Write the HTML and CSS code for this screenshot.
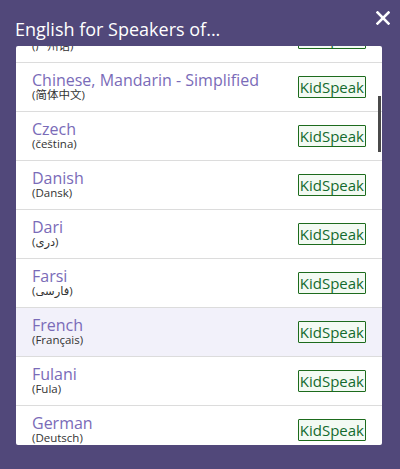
FILE: index.html
```html
<html lang="en">
<head>
  <meta charset="UTF-8">
  <title>English for Speakers of...</title>
  <link rel="stylesheet" href="styles.css">
</head>
<body>

<div class="dialog">
  <div class="dialog_header">
    <h1 class="dialog_title">English for Speakers of...</h1>
    <button class="dialog_close" aria-label="Close">
      <svg viewBox="0 0 14 14" width="14" height="14">
        <line x1="1.5" y1="1.5" x2="12.5" y2="12.5" />
        <line x1="12.5" y1="1.5" x2="1.5" y2="12.5" />
      </svg>
    </button>
  </div>

  <div class="lang_panel">
    <ul class="lang_list">
      <!-- list is scrolled: the Cantonese row is only partly in view -->
      <li class="lang_row lang_row--cut">
        <div class="lang_names">
          <span class="lang_name">Chinese, Cantonese - Traditional</span>
          <span class="lang_native">(广州话)</span>
        </div>
        <span class="kidspeak">KidSpeak</span>
      </li>
      <li class="lang_row">
        <div class="lang_names">
          <span class="lang_name">Chinese, Mandarin - Simplified</span>
          <span class="lang_native">(简体中文)</span>
        </div>
        <span class="kidspeak">KidSpeak</span>
      </li>
      <li class="lang_row">
        <div class="lang_names">
          <span class="lang_name">Czech</span>
          <span class="lang_native">(čeština)</span>
        </div>
        <span class="kidspeak">KidSpeak</span>
      </li>
      <li class="lang_row">
        <div class="lang_names">
          <span class="lang_name">Danish</span>
          <span class="lang_native">(Dansk)</span>
        </div>
        <span class="kidspeak">KidSpeak</span>
      </li>
      <li class="lang_row">
        <div class="lang_names">
          <span class="lang_name">Dari</span>
          <span class="lang_native">(دری)</span>
        </div>
        <span class="kidspeak">KidSpeak</span>
      </li>
      <li class="lang_row">
        <div class="lang_names">
          <span class="lang_name">Farsi</span>
          <span class="lang_native">(فارسی)</span>
        </div>
        <span class="kidspeak">KidSpeak</span>
      </li>
      <li class="lang_row lang_row--hover">
        <div class="lang_names">
          <span class="lang_name">French</span>
          <span class="lang_native">(Français)</span>
        </div>
        <span class="kidspeak">KidSpeak</span>
      </li>
      <li class="lang_row">
        <div class="lang_names">
          <span class="lang_name">Fulani</span>
          <span class="lang_native">(Fula)</span>
        </div>
        <span class="kidspeak">KidSpeak</span>
      </li>
      <li class="lang_row">
        <div class="lang_names">
          <span class="lang_name">German</span>
          <span class="lang_native">(Deutsch)</span>
        </div>
        <span class="kidspeak">KidSpeak</span>
      </li>
    </ul>
    <div class="scroll_thumb"></div>
  </div>
</div>

</body>
</html>
```

FILE: styles.css
```css
* {
  padding: 0;
  margin: 0;
  box-sizing: border-box;
}

body {
  margin: 0;
  width: 400px;
  height: 469px;
  overflow: hidden;
  background: #51487a;
  font-family: 'Open Sans', 'DejaVu Sans', 'Noto Sans CJK SC', sans-serif;
}

.dialog {
  position: relative;
  display: flex;
  flex-direction: column;
}

.dialog_header {
  padding: 17px 16px 5px 15px;
}

.dialog_title {
  font-size: 18px;
  line-height: 24px;
  font-weight: normal;
  color: #fff;
}

.dialog_close {
  position: absolute;
  top: 11px;
  right: 10px;
  background: none;
  border: 0;
  display: flex;
}

.dialog_close svg {
  stroke: #fff;
  stroke-width: 2.6;
  stroke-linecap: square;
}

.lang_panel {
  position: relative;
  margin: 0 18px 0 16px;
  height: 399px;
  overflow: hidden;
  background: #fff;
  border-radius: 2px;
}

.lang_list {
  list-style: none;
}

.scroll_thumb {
  position: absolute;
  top: 50px;
  right: 1px;
  width: 3px;
  height: 56px;
  background: #4a4a4a;
}

.lang_row {
  display: flex;
  align-items: center;
  justify-content: space-between;
  height: 49px;
  padding: 0 16px 1px 16px;
  border-bottom: 1px solid #dcdcdc;
}

.lang_row--cut {
  margin-top: -32px;
}

.lang_row--hover {
  background: #f2f1fa;
}

.lang_names {
  display: flex;
  flex-direction: column;
}

.lang_name {
  font-size: 16px;
  line-height: 16px;
  color: #7a6bb8;
}

.lang_native {
  font-size: 11.5px;
  line-height: 14px;
  color: #333;
}

.kidspeak {
  font-size: 15px;
  line-height: 20px;
  padding: 0 1px;
  color: #136b2e;
  background: #f3faf3;
  border: 1px solid #1d6b1d;
  border-radius: 1px;
}
```
